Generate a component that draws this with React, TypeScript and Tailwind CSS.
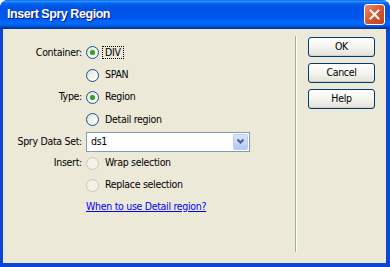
import React from "react";

const font = { fontFamily: '"DejaVu Sans Condensed", "Liberation Sans", sans-serif' };

function Radio({ checked, disabled }: { checked?: boolean; disabled?: boolean }) {
  return (
    <span
      className={`flex h-[13px] w-[13px] shrink-0 items-center justify-center rounded-full border ${
        disabled
          ? "border-[#CAC8BB] bg-[#F2F1EA]"
          : "border-[#1C5180] bg-gradient-to-br from-[#DCDCD7] via-[#F4F4F1] to-white"
      }`}
    >
      {checked && <span className="h-[5px] w-[5px] rounded-full bg-[#2FA12F] shadow-[0_0_1px_#7DD47D]" />}
    </span>
  );
}

function Row({ label, h, children }: { label?: string; h: string; children: React.ReactNode }) {
  return (
    <div className={`flex items-center ${h}`}>
      <div className="w-[79px] text-right">{label}</div>
      <div className="ml-[4px] flex items-center">{children}</div>
    </div>
  );
}

function Button({ children }: { children: React.ReactNode }) {
  return (
    <button className="flex h-[20px] w-[67px] items-center justify-center rounded-[3px] border border-[#003C74] bg-gradient-to-b from-white via-[#F4F4F0] to-[#E3E2DA] text-black shadow-[inset_0_-1px_0_#D6D0C5]">
      {children}
    </button>
  );
}

export default function App() {
  return (
    <div className="flex h-[267px] w-[390px] flex-col overflow-hidden rounded-t-[8px] bg-[#0A47D6]" style={font}>
      {/* Title bar */}
      <div className="flex h-[29px] shrink-0 items-center justify-between bg-[linear-gradient(to_bottom,#0058EE_0%,#3593FF_4%,#288EFF_6%,#127DFF_8%,#036FFC_10%,#0262EE_14%,#0057E5_20%,#0054E3_24%,#0055EB_56%,#005BF5_66%,#026AFE_76%,#0062EF_86%,#0052D6_92%,#0040AB_94%,#003092_100%)] pl-[7px] pr-[5px]">
        <span
          className="text-[12.5px] font-bold tracking-[-0.45px] text-white [text-shadow:1px_1px_#0F1089]"
          style={{ fontFamily: '"Liberation Sans", sans-serif' }}
        >
          Insert Spry Region
        </span>
        <div className="flex h-[21px] w-[21px] items-center justify-center rounded-[3px] border border-white bg-gradient-to-br from-[#EE8A66] via-[#DA5530] to-[#C2401A]">
          <svg width="11" height="11" viewBox="0 0 11 11">
            <path d="M1.5 1.5 L9.5 9.5 M9.5 1.5 L1.5 9.5" stroke="white" strokeWidth="2" strokeLinecap="square" />
          </svg>
        </div>
      </div>

      {/* Body */}
      <div className="flex flex-1 border-l-[3px] border-r-[4px] border-b-[4px] border-[#0A47D6]">
        <div className="flex flex-1 bg-[#ECE9D8] text-[10.5px] tracking-[-0.3px] text-black">
          {/* Form */}
          <div className="w-[292px] pt-[12px]">
            <Row label="Container:" h="h-[23px]">
              <Radio checked />
              <span className="ml-[3px] flex h-[13px] items-center border border-dotted border-black px-[2px]">DIV</span>
            </Row>
            <Row h="h-[22px]">
              <Radio />
              <span className="ml-[6px]">SPAN</span>
            </Row>
            <Row label="Type:" h="h-[22px]">
              <Radio checked />
              <span className="ml-[6px]">Region</span>
            </Row>
            <Row h="h-[23px]">
              <Radio />
              <span className="ml-[6px]">Detail region</span>
            </Row>
            <Row label="Spry Data Set:" h="h-[21px]">
              <div className="flex h-[20px] w-[164px] items-center border border-[#7F9DB9] bg-white p-[1px]">
                <span className="flex-1 pl-[3px]">ds1</span>
                <div className="flex h-full w-[15px] items-center justify-center rounded-[2px] border border-[#B9CCF5] bg-gradient-to-b from-[#D9E4FD] to-[#B5C9F6]">
                  <svg width="9" height="7" viewBox="0 0 9 7">
                    <path d="M1.5 1.5 L4.5 4.5 L7.5 1.5" fill="none" stroke="#4D6185" strokeWidth="2" />
                  </svg>
                </div>
              </div>
            </Row>
            <Row label="Insert:" h="h-[22px]">
              <Radio disabled />
              <span className="ml-[6px]">Wrap selection</span>
            </Row>
            <Row h="h-[22px]">
              <Radio disabled />
              <span className="ml-[6px]">Replace selection</span>
            </Row>
            <Row h="h-[22px]">
              <a className="cursor-pointer text-[#0000FF] underline">When to use Detail region?</a>
            </Row>
          </div>

          {/* Separator */}
          <div className="mt-[7px] mb-[11px] w-[2px] border-l border-r border-l-[#ACA899] border-r-white" />

          {/* Buttons */}
          <div className="ml-[11px] flex flex-col gap-[6px] pt-[8px]">
            <Button>OK</Button>
            <Button>Cancel</Button>
            <Button>Help</Button>
          </div>
        </div>
      </div>
    </div>
  );
}
